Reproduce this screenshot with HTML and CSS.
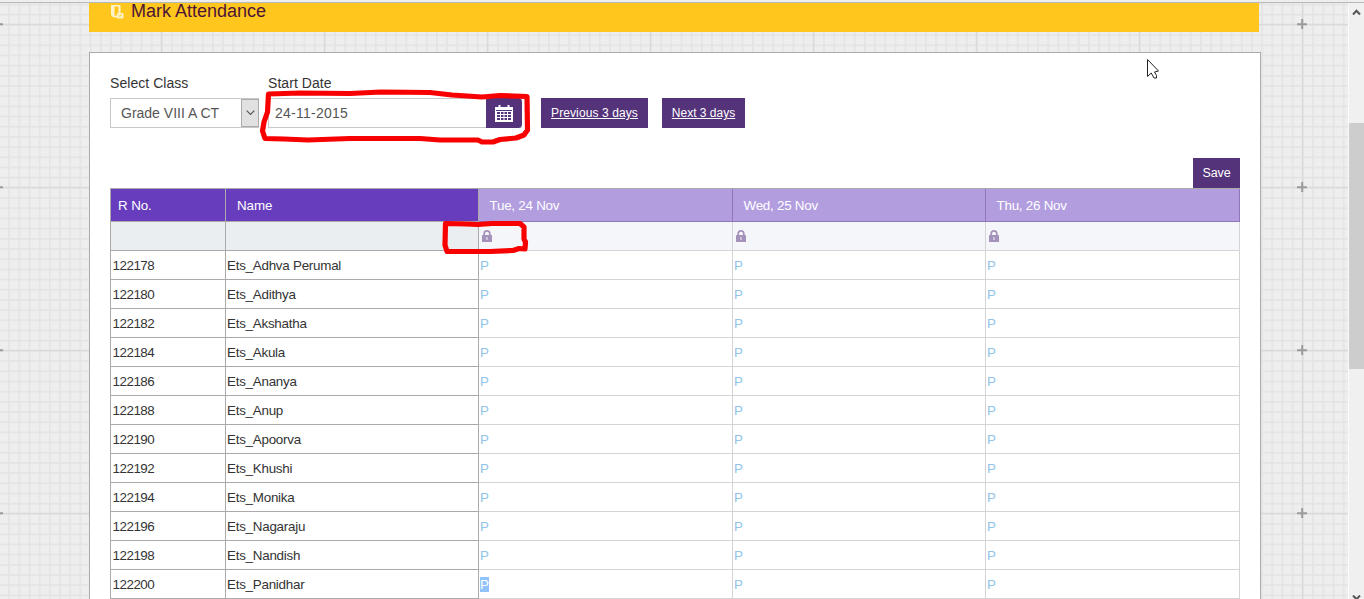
FILE: index.html
```html
<!DOCTYPE html>
<html lang="en">
<head>
<meta charset="utf-8">
<title>Mark Attendance</title>
<link rel="stylesheet" href="styles.css">
</head>
<body>
<svg class="defs" width="0" height="0" aria-hidden="true">
  <symbol id="lock" viewBox="0 0 10 12"><path d="M2.2 6V3.700a2.800 2.800 0 0 1 5.600 0V6" fill="none" stroke="#a592bb" stroke-width="1.7"/><rect y="5" width="10" height="7" rx=".6" fill="#a592bb"/><path d="M5 7v3" stroke="#e6e0ee" stroke-width="1.2"/></symbol>
</svg>
<svg class="paper" width="1348" height="599" aria-hidden="true">
  <defs>
    <pattern id="minor" x="1302" y="24" width="10.1875" height="10.1875" patternUnits="userSpaceOnUse"><path d="M0 .8H10.2M.8 0V10.2" stroke="#e4e4e4" stroke-width="1.6"/></pattern>
    <pattern id="major" x="1297" y="19" width="163" height="163" patternUnits="userSpaceOnUse"><path d="M0 5.5H163M5.5 0V163" stroke="#dadada" stroke-width="1.5"/><path d="M0 5.2H10M5.2 0V10" stroke="#9b9b9b" stroke-width="2"/></pattern>
  </defs>
  <rect width="1348" height="599" fill="#eee"/><rect width="1348" height="599" fill="url(#minor)"/><rect width="1348" height="599" fill="url(#major)"/>
</svg>
<div class="topline"></div>
<div class="window">
  <main class="page">
    <header class="banner">
      <svg class="banner-icon" width="14" height="15" viewBox="0 0 14 15"><path d="M1 1H10.500V9H8.500V2.500H4.500V11.500H7V13.500H3.500L1 11Z" fill="#fff3c9"/><rect x="7" y="9" width="6.500" height="5.500" rx="1" fill="#fff3c9"/><path d="M8.500 11.200l1.300 1.300 2-2.300" fill="none" stroke="#ffc61e"/></svg>
      <h1>Mark Attendance</h1>
    </header>
    <section class="panel">
      <div class="filters">
        <div class="field class-field">
          <span class="label">Select Class</span>
          <div class="select"><span>Grade VIII A CT</span><i class="arrow"><svg width="9" height="6" viewBox="0 0 9 6"><path d="M.7.7l3.8 3.8L8.3.7" fill="none" stroke="#555" stroke-width="1.2"/></svg></i></div>
        </div>
        <div class="field date-field">
          <span class="label">Start Date</span>
          <div class="date"><span class="date-value">24-11-2015</span><i class="calendar"><svg width="18" height="17" viewBox="0 0 18 17"><path d="M0 2h18v15H0z" fill="#fff"/><path d="M4.500 0v3M13.500 0v3" stroke="#fff" stroke-width="2"/><path d="M1 5.500h16" stroke="#54337a"/><path d="M2 7h3v2H2zM6 7h2.500v2H6zM9.500 7h2.500v2H9.500zM13 7h3v2h-3zM2 10h3v2H2zM6 10h2.500v2H6zM9.500 10h2.500v2H9.500zM13 10h3v2h-3zM2 13h3v2H2zM6 13h2.500v2H6zM9.500 13h2.500v2H9.500zM13 13h3v2h-3z" fill="#54337a"/></svg></i></div>
        </div>
        <a class="button prev">Previous 3 days</a>
        <a class="button next">Next 3 days</a>
      </div>
      <div class="actions"><span class="save">Save</span></div>
      <table class="grid">
        <colgroup><col class="c1"><col class="c2"><col class="c3"><col class="c4"><col class="c5"></colgroup>
        <thead>
          <tr><th>R No.</th><th>Name</th><th>Tue, 24 Nov</th><th>Wed, 25 Nov</th><th>Thu, 26 Nov</th></tr>
        </thead>
        <tbody>
          <tr class="locks"><td></td><td></td><td><svg width="10" height="12"><use href="#lock"/></svg></td><td><svg width="10" height="12"><use href="#lock"/></svg></td><td><svg width="10" height="12"><use href="#lock"/></svg></td></tr>
          <tr><td>122178</td><td>Ets_Adhva Perumal</td><td>P</td><td>P</td><td>P</td></tr>
          <tr><td>122180</td><td>Ets_Adithya</td><td>P</td><td>P</td><td>P</td></tr>
          <tr><td>122182</td><td>Ets_Akshatha</td><td>P</td><td>P</td><td>P</td></tr>
          <tr><td>122184</td><td>Ets_Akula</td><td>P</td><td>P</td><td>P</td></tr>
          <tr><td>122186</td><td>Ets_Ananya</td><td>P</td><td>P</td><td>P</td></tr>
          <tr><td>122188</td><td>Ets_Anup</td><td>P</td><td>P</td><td>P</td></tr>
          <tr><td>122190</td><td>Ets_Apoorva</td><td>P</td><td>P</td><td>P</td></tr>
          <tr><td>122192</td><td>Ets_Khushi</td><td>P</td><td>P</td><td>P</td></tr>
          <tr><td>122194</td><td>Ets_Monika</td><td>P</td><td>P</td><td>P</td></tr>
          <tr><td>122196</td><td>Ets_Nagaraju</td><td>P</td><td>P</td><td>P</td></tr>
          <tr><td>122198</td><td>Ets_Nandish</td><td>P</td><td>P</td><td>P</td></tr>
          <tr><td>122200</td><td>Ets_Panidhar</td><td><span class="selected">P</span></td><td>P</td><td>P</td></tr>
        </tbody>
      </table>
    </section>
  </main>
  <aside class="scrollbar">
    <svg class="up" width="9" height="7" viewBox="0 0 9 7"><path d="M1 5.5l3.5-3.7L8 5.5" fill="none" stroke="#555" stroke-width="2"/></svg>
    <div class="thumb"></div>
    <svg class="down" width="9" height="4" viewBox="0 0 9 4"><path d="M1 .5l3.5 3.7L8 .5" fill="none" stroke="#555" stroke-width="2"/></svg>
  </aside>
</div>
<svg class="marks" width="1364" height="599" viewBox="0 0 1364 599" aria-hidden="true">
  <g fill="none" stroke="#f90000" stroke-width="5.2" stroke-linejoin="round" stroke-linecap="round">
    <path d="M268.500 94L300 93L350 93.500L381 92L430 92.500L452 95L482 97L500 95.500L527 96.500L527.500 130L524 135L516 138L500 139.500L493 142L482 142L478 140L440 140L420 138.500L350 138.500L308 140L284 139L265 138.500L262.500 131L264 122L267.500 112Z"/>
    <path d="M445.500 223.500L466 224L478 224.500L492 223.500L520 223.500L524 227L524 239L525.500 242L525 249L519 248.500L513 250.500L490 251.500L447 251.500L445 245Z"/>
  </g>
  <path d="M1147.500 59.500V76.500L1151.200 73L1154 78H1156.500V75.500L1154.500 72L1158.500 71Z" fill="#fff" stroke="#222" stroke-width="1"/>
</svg>
</body>
</html>
```
FILE: styles.css
```css
* { box-sizing: border-box; }
body {
  margin: 0;
  height: 599px;
  overflow: hidden;
  position: relative;
  font: 14px/16px "Liberation Sans", Arial, sans-serif;
  color: #333;
}
.defs, .paper, .marks { display: block; position: absolute; top: 0; left: 0; }
.topline { position: relative; height: 3px; background: #eee; border-bottom: 1px solid #b9b9b9; }
.window { position: relative; display: flex; height: 596px; }
.page { width: 1348px; padding-left: 89px; }
.banner {
  display: flex;
  width: 1170px;
  height: 29px;
  padding-left: 21px;
  background: #ffc61e;
}
.banner-icon { margin: 1px 7px 0 0; flex: none; }
h1 { margin: -2px 0 0; font-size: 18px; line-height: 20px; font-weight: 400; color: #4b1535; }
.panel {
  width: 1172px;
  height: 547px;
  margin-top: 20px;
  padding: 22px 20px 0;
  background: #fff;
  border: 1px solid #aaa;
  border-bottom: 0;
}
.filters { display: flex; align-items: flex-end; height: 53px; }
.field { display: flex; flex-direction: column; justify-content: space-between; height: 53px; }
.label { letter-spacing: .05px; }
.class-field { width: 149px; margin-right: 9px; }
.select, .date { display: flex; height: 30px; border: 1px solid #c8c8c8; color: #555; }
.select { padding-left: 10px; line-height: 28px; justify-content: space-between; }
.arrow { display: grid; place-items: center; width: 18px; height: 28px; margin-right: -1px; background: #e1e1e1; border: 1px solid #aaa; }
.date-field { width: 254px; margin-right: 19px; }
.date { justify-content: space-between; padding-left: 6px; line-height: 28px; border-right: 0; letter-spacing: .25px; }
.calendar { display: grid; place-items: center; width: 36px; height: 30px; margin-top: -1px; background: #54337a; border-radius: 0 4px 4px 0; }
.button, .save { display: block; height: 30px; background: #54337a; color: #fff; text-align: center; font-size: 12px; line-height: 30px; white-space: nowrap; }
.button { text-decoration: underline; letter-spacing: .1px; }
.prev { width: 107px; margin-right: 14px; }
.next { width: 83px; letter-spacing: 0; }
.actions { display: flex; justify-content: flex-end; margin-top: 30px; }
.save { width: 47px; font-size: 12.5px; line-height: 30px; letter-spacing: -.1px; }
.grid { width: 1130px; table-layout: fixed; border-spacing: 0; border-top: 1px solid #aaa; border-left: 1px solid #aaa; }
.c1 { width: 115px; }
.c2, .c4 { width: 253px; }
.c3, .c5 { width: 254px; }
th, td { padding: 0 1px; text-align: left; border-right: 1px solid #d4d4d4; border-bottom: 1px solid #d4d4d4; overflow: hidden; }
th { height: 33px; padding: 1px 0 0 11px; background: #b29ddf; color: #fff; font-size: 13.4px; letter-spacing: -.25px; font-weight: 400; border-color: #9077bd; }
th:first-child { padding-left: 7px; }
th:nth-child(n+3) { padding-left: 10.5px; }
th:nth-child(-n+2) { background: #673dbd; border-color: #aaa; letter-spacing: -.1px; }
td { height: 29px; padding-top: 2px; font-size: 13.4px; letter-spacing: -.25px; }
td:first-child { letter-spacing: -.48px; padding-left: 1.5px; }
td:nth-child(-n+2) { border-color: #aaa; }
td:nth-child(n+3) { color: #91c4e8; letter-spacing: 0; }
.locks td { padding-top: 0; background: #f5f6f9; }
.locks td:nth-child(-n+2) { background: #ebeef0; }
.locks svg { display: block; margin-left: 2px; }
.selected { background: #90c3fb; color: #fff; }
.scrollbar { width: 16px; background: #f0f0f0; border-left: 1px solid #fafafa; }
.up { display: block; margin: 6px 0 0 3px; }
.thumb { height: 246px; margin-top: 107px; background: #cdcdcd; }
.down { display: block; margin: 226px 0 0 3px; }
```
